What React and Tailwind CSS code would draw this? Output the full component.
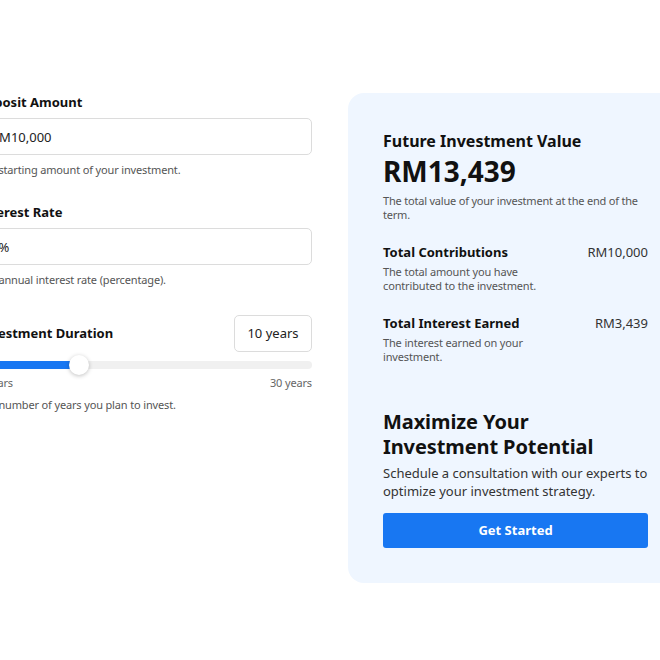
import React, { useState } from "react";

const font = { fontFamily: '"Noto Sans", "Liberation Sans", sans-serif' };

function Field({ label, value, help }) {
  return (
    <div className="flex flex-col">
      <label className="text-[13px] font-bold text-[#111] leading-4">{label}</label>
      <input
        readOnly
        value={value}
        className="mt-2 h-[37px] w-full rounded-[5px] border border-[#dcdcdc] bg-white px-[13px] text-[13px] text-[#222] outline-none"
      />
      <p className="mt-[7px] text-[11px] tracking-[-0.15px] text-[#555] leading-4">{help}</p>
    </div>
  );
}

export default function App() {
  const [years, setYears] = useState(10);
  const min = 1;
  const max = 30;
  const pct = ((years - min) / (max - min)) * 100;

  return (
    <div className="flex h-[660px] w-full justify-center overflow-hidden bg-white" style={font}>
      <div className="grid w-[706px] shrink-0 grid-cols-2 gap-9 pt-[93px]">
        {/* inputs */}
        <div className="flex flex-col pt-[1px]">
          <Field label="Deposit Amount" value="RM10,000" help="The starting amount of your investment." />
          <div className="mt-[26px]">
            <Field label="Interest Rate" value="3%" help="The annual interest rate (percentage)." />
          </div>
          <div className="mt-[27px] flex items-center justify-between">
            <span className="text-[13px] font-bold text-[#111]">Investment Duration</span>
            <div className="flex h-[37px] w-[78px] items-center justify-center rounded-[5px] border border-[#dcdcdc] text-[13px] text-[#222]">
              {years} years
            </div>
          </div>
          <div className="relative mt-[3px] h-[20px]">
            <div className="absolute left-0 right-0 top-[6px] h-[8px] rounded-full bg-[#f0f0f0]" />
            <div
              className="absolute left-0 top-[6px] h-[8px] rounded-l-full bg-[#1877f2]"
              style={{ width: `${pct}%` }}
            />
            <div
              className="absolute top-0 h-[20px] w-[20px] rounded-full bg-white shadow-[0_1px_4px_rgba(0,0,0,0.25)]"
              style={{ left: `calc(${pct}% - 12px)` }}
            />
          </div>
          <div className="flex justify-between text-[11px] leading-4 tracking-[-0.15px] text-[#666]">
            <span>{min} years</span>
            <span>{max} years</span>
          </div>
          <p className="mt-[6px] text-[11px] leading-4 tracking-[-0.15px] text-[#555]">
            The number of years you plan to invest.
          </p>
        </div>

        {/* results */}
        <div className="h-[490px] rounded-[16px] bg-[#eff6ff] px-[35px] pt-[36px]">
          <h2 className="text-[16px] font-bold leading-6 text-[#111]">Future Investment Value</h2>
          <div className="text-[28px] font-bold leading-9 text-[#111]">RM13,439</div>
          <p className="mt-[5px] text-[11px] leading-[14px] tracking-[-0.2px] text-[#555]">
            The total value of your investment at the end of the term.
          </p>

          <div className="mt-[20px] flex items-start justify-between">
            <div>
              <div className="text-[13px] font-bold leading-5 text-[#111]">Total Contributions</div>
              <p className="mt-[3px] w-[165px] text-[11px] leading-[14px] tracking-[-0.15px] text-[#555]">
                The total amount you have contributed to the investment.
              </p>
            </div>
            <span className="text-[13px] leading-5 text-[#333]">RM10,000</span>
          </div>

          <div className="mt-[20px] flex items-start justify-between">
            <div>
              <div className="text-[13px] font-bold leading-5 text-[#111]">Total Interest Earned</div>
              <p className="mt-[3px] w-[165px] text-[11px] leading-[14px] tracking-[-0.15px] text-[#555]">
                The interest earned on your investment.
              </p>
            </div>
            <span className="text-[13px] leading-5 text-[#333]">RM3,439</span>
          </div>

          <h3 className="mt-[45px] text-[20px] font-bold leading-[25px] tracking-[-0.1px] text-[#111]">
            Maximize Your
            <br />
            Investment Potential
          </h3>
          <p className="mt-[5px] text-[13px] leading-[18px] text-[#333]">
            Schedule a consultation with our experts to optimize your investment strategy.
          </p>
          <button
            onClick={() => setYears(years)}
            className="mt-[13px] h-[35px] w-full rounded-[3px] bg-[#1877f2] text-[13px] font-bold text-white"
          >
            Get Started
          </button>
        </div>
      </div>
    </div>
  );
}
